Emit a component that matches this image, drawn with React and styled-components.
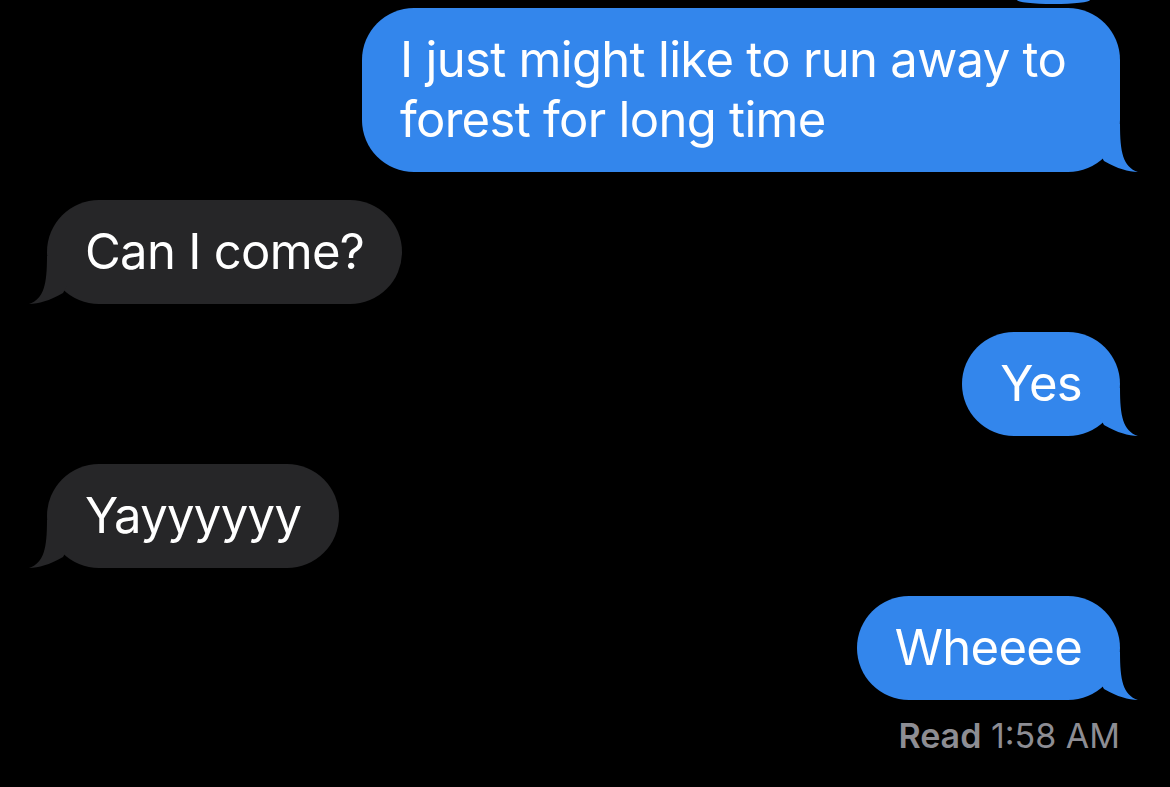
import styled, { createGlobalStyle } from "styled-components";

const Global = createGlobalStyle`
  html, body {
    margin: 0;
    padding: 0;
    background: #000;
  }
  body {
    font-family: Inter, "Noto Sans", "Liberation Sans", sans-serif;
    -webkit-font-smoothing: antialiased;
  }
`;

const BLUE = "#3386ec";
const GRAY = "#262628";

const messages = [
  { id: 1, from: "me", text: "I just might like to run away to forest for long time" },
  { id: 2, from: "them", text: "Can I come?" },
  { id: 3, from: "me", text: "Yes" },
  { id: 4, from: "them", text: "Yayyyyyy" },
  { id: 5, from: "me", text: "Wheeee", read: "1:58 AM" },
];

const Tail = ({ side, color }) => (
  <TailSvg $side={side} width="40" height="48" viewBox="0 0 40 48">
    <path
      d="M20 0 C20 28 23 43 38 48 C28 47.6 18 45 4 37 L0 30 L0 0 Z"
      fill={color}
    />
  </TailSvg>
);

const App = () => {
  return (
    <>
      <Global />
      <Thread>
        <Sliver />
        {messages.map((m) => {
          const side = m.from === "me" ? "right" : "left";
          return (
            <Group key={m.id} $side={side}>
              <Bubble $side={side}>
                {m.text}
                <Tail side={side} color={side === "right" ? BLUE : GRAY} />
              </Bubble>
              {m.read && (
                <Receipt>
                  <b>Read</b> {m.read}
                </Receipt>
              )}
            </Group>
          );
        })}
      </Thread>
    </>
  );
};

//Styled components
const Thread = styled.div`
  display: flex;
  flex-direction: column;
  gap: 28px;
  padding: 0 50px 40px 47px;
  min-height: 787px;
  box-sizing: border-box;
  background: #000;
`;

const Sliver = styled.div`
  align-self: flex-end;
  margin-right: 30px;
  width: 73px;
  height: 4px;
  margin-bottom: -24px;
  background: ${BLUE};
  border-radius: 0 0 36px 36px / 0 0 4px 4px;
`;

const Group = styled.div`
  display: flex;
  flex-direction: column;
  align-items: ${(p) => (p.$side === "right" ? "flex-end" : "flex-start")};
  gap: 17px;
`;

const Bubble = styled.div`
  position: relative;
  max-width: 682px;
  padding: 22px 38px;
  border-radius: 52px;
  background: ${(p) => (p.$side === "right" ? BLUE : GRAY)};
  color: #fff;
  font-size: 49px;
  line-height: 60px;
  letter-spacing: -0.7px;
`;

const TailSvg = styled.svg`
  position: absolute;
  bottom: 0;
  ${(p) =>
    p.$side === "right"
      ? "right: -20px;"
      : "left: -20px; transform: scaleX(-1);"}
  display: block;
`;

const Receipt = styled.div`
  color: #8d8d93;
  font-size: 34px;
  line-height: 38px;
  b {
    font-weight: 600;
  }
`;

export default App;
